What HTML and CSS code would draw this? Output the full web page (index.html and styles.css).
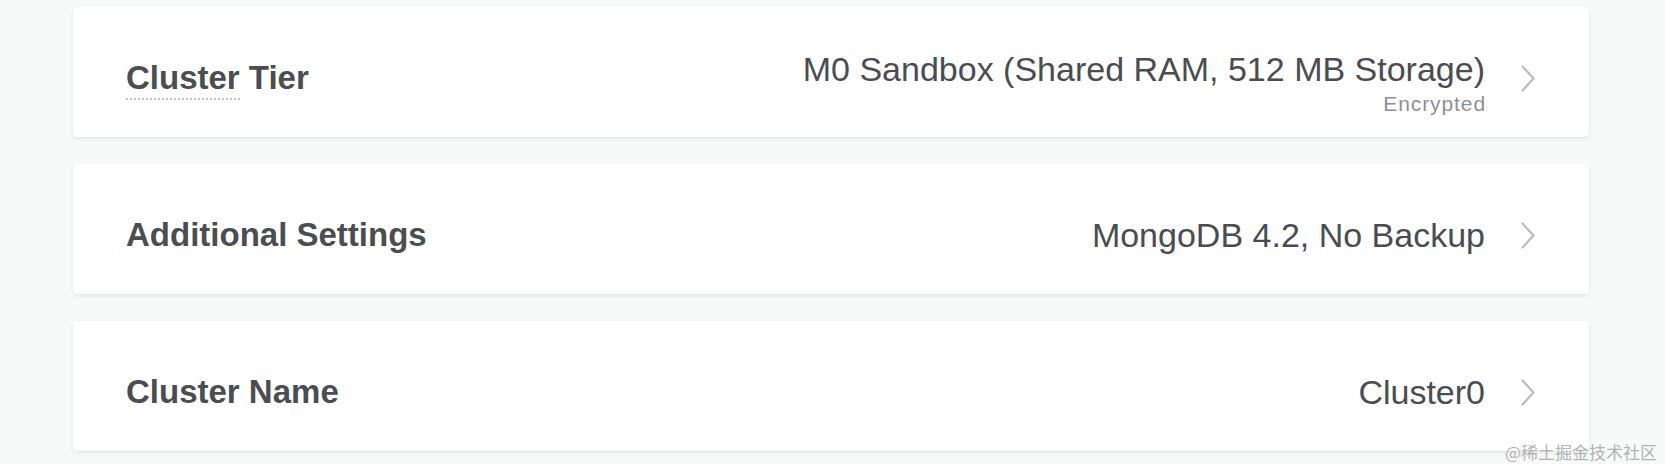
FILE: index.html
```html
<!DOCTYPE html>
<html>
<head>
<meta charset="utf-8">
<link rel="stylesheet" href="styles.css">
</head>
<body>
<div class="list">
  <div class="card">
    <div class="title"><span class="dotted">Cluster</span> Tier</div>
    <div class="value with-sub">
      <div class="main">M0 Sandbox (Shared RAM, 512 MB Storage)</div>
      <div class="sub">Encrypted</div>
    </div>
    <svg class="chev" width="14" height="27" viewBox="0 0 14 27"><path d="M1.5 1.5 L12.5 13.5 L1.5 25.5" fill="none" stroke="#b9bcbe" stroke-width="2.2" stroke-linecap="round" stroke-linejoin="round"/></svg>
  </div>
  <div class="card">
    <div class="title">Additional Settings</div>
    <div class="value">
      <div class="main">MongoDB 4.2, No Backup</div>
    </div>
    <svg class="chev" width="14" height="27" viewBox="0 0 14 27"><path d="M1.5 1.5 L12.5 13.5 L1.5 25.5" fill="none" stroke="#b9bcbe" stroke-width="2.2" stroke-linecap="round" stroke-linejoin="round"/></svg>
  </div>
  <div class="card">
    <div class="title">Cluster Name</div>
    <div class="value">
      <div class="main">Cluster0</div>
    </div>
    <svg class="chev" width="14" height="27" viewBox="0 0 14 27"><path d="M1.5 1.5 L12.5 13.5 L1.5 25.5" fill="none" stroke="#b9bcbe" stroke-width="2.2" stroke-linecap="round" stroke-linejoin="round"/></svg>
  </div>
</div>
<div class="watermark">@稀土掘金技术社区</div>
</body>
</html>
```

FILE: styles.css
```css
html, body {
  margin: 0;
  padding: 0;
}
body {
  background: #f8f9f9;
  font-family: "Liberation Sans", Arial, sans-serif;
  width: 1665px;
  height: 464px;
  overflow: hidden;
  position: relative;
}
.list {
  display: flex;
  flex-direction: column;
  gap: 27px;
  padding: 7px 76px 0 73px;
}
.card {
  height: 130px;
  box-sizing: border-box;
  background: #ffffff;
  border-radius: 4px;
  box-shadow: 0 2px 4px rgba(0, 0, 0, 0.08), 0 0 2px rgba(0, 0, 0, 0.03);
  display: flex;
  align-items: center;
  padding: 12px 54px 0 53px;
}
.title {
  flex: 1;
  font-size: 33px;
  line-height: 38px;
  font-weight: bold;
  color: #4a4e51;
}
.dotted {
  border-bottom: 2px dotted #c2c5c7;
  padding-bottom: 2px;
}
.value {
  text-align: right;
  margin-right: 36px;
  color: #4a4d50;
}
.value .main {
  font-size: 34px;
  line-height: 38px;
}
.value.with-sub {
  padding-top: 8px;
}
.value .sub {
  font-size: 21px;
  line-height: 20px;
  margin-top: 6px;
  color: #8c9194;
  letter-spacing: 0.9px;
  margin-right: -1px;
}
.chev {
  display: block;
  flex: none;
}
.watermark {
  position: absolute;
  right: 8px;
  bottom: 1px;
  font-family: "Noto Sans CJK SC", sans-serif;
  font-size: 17px;
  line-height: 22px;
  color: rgba(160, 160, 160, 0.8);
}
```
